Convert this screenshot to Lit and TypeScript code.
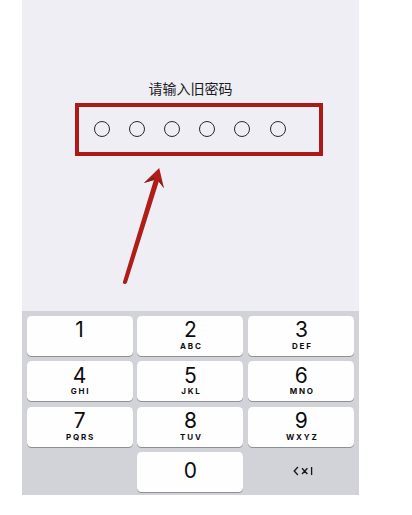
import { LitElement, html, css } from "lit";
import { customElement, property } from "lit/decorators.js";

@customElement("key-button")
class KeyButton extends LitElement {
  @property() digit = "";
  @property() letters = "";

  static styles = css`
    :host {
      display: flex;
      flex-direction: column;
      align-items: center;
      box-sizing: border-box;
      height: 40px;
      padding-top: 2.5px;
      border-radius: 4.5px;
      background: #fefeff;
      box-shadow: 0 1px 0 #8f9095;
      color: #0c0c0e;
      font-family: Inter, "Liberation Sans", sans-serif;
    }
    :host([centered]) {
      padding-top: 7px;
    }
    :host([lower]) {
      padding-top: 4px;
    }
    .digit {
      font-size: 21px;
      line-height: 24px;
      height: 24px;
    }
    :host([lower]) .digit {
      line-height: 22px;
      height: 22px;
    }
    .letters {
      font-size: 8px;
      font-weight: 700;
      line-height: 8px;
      letter-spacing: 1.8px;
      margin-right: -1.8px;
    }
  `;

  render() {
    return html`<div class="digit">${this.digit}</div>
      <div class="letters">${this.letters}</div>`;
  }
}

@customElement("app-root")
class AppRoot extends LitElement {
  static styles = css`
    :host {
      display: block;
      width: 412px;
      height: 515px;
      background: #fff;
      overflow: hidden;
    }
    .screen {
      position: relative;
      display: flex;
      flex-direction: column;
      width: 337px;
      height: 495px;
      margin-left: 22px;
      background: #efeef4;
    }
    .prompt {
      flex: 1;
    }
    .title {
      margin-top: 78px;
      height: 20px;
      line-height: 20px;
      text-align: center;
      font-family: "Noto Sans CJK SC", sans-serif;
      font-size: 14px;
      color: #1b1b1f;
    }
    .code {
      display: flex;
      align-items: center;
      box-sizing: border-box;
      width: 248px;
      height: 53px;
      margin: 5px 0 0 53px;
      padding: 0 0 2px 15px;
      border: 4px solid #ab1a17;
      gap: 19.1px;
    }
    .dot {
      box-sizing: border-box;
      width: 16px;
      height: 16px;
      border: 1.2px solid #29292d;
      border-radius: 50%;
    }
    .dot:last-child {
      margin-left: 0.5px;
    }
    .arrow {
      position: absolute;
      left: 98px;
      top: 164px;
      width: 50px;
      height: 124px;
    }
    .keyboard {
      display: grid;
      box-sizing: border-box;
      height: 184px;
      grid-template-columns: repeat(3, 106px);
      grid-auto-rows: 40px;
      gap: 5.6px 4.9px;
      padding: 4.7px 0 0 4.6px;
      background: #d1d3d9;
    }
    .delete {
      display: flex;
      align-items: center;
      justify-content: center;
    }
    .delete svg {
      width: 20px;
      height: 10px;
      margin: -2px 0 0 4px;
    }
  `;

  render() {
    const keys = [
      ["1", ""], ["2", "ABC"], ["3", "DEF"],
      ["4", "GHI"], ["5", "JKL"], ["6", "MNO"],
      ["7", "PQRS"], ["8", "TUV"], ["9", "WXYZ"],
    ];
    return html`
      <div class="screen">
        <div class="prompt">
          <div class="title">请输入旧密码</div>
          <div class="code">${keys.slice(0, 6).map(() => html`<div class="dot"></div>`)}</div>
        </div>
        <svg class="arrow" viewBox="120 164 50 124">
          <path d="M159.2 168 L164 188.2 L158.8 181.5 L127 282.6 Q126.2 284.2 124.6 284.1 Q122.6 283.8 122.9 282 L153.9 180 L143.8 183 Z" fill="#b01c16" />
          <path d="M143.8 183 L154 176.5 L153.9 180 Z M164 188.2 L160.5 179.5 L158.8 181.5 Z" fill="#7d221d" />
        </svg>
        <div class="keyboard">
          ${keys.map(
            ([d, l], i) => html`<key-button digit=${d} letters=${l} ?lower=${i > 2 && i < 6}></key-button>`
          )}
          <div></div>
          <key-button digit="0" centered></key-button>
          <div class="delete">
            <svg viewBox="0 0 20 10" fill="none" stroke="#151518" stroke-width="1.3">
              <path d="M4.9 1 L1.2 5 L4.9 9 M9 2.3 L14.4 8 M14.4 2.3 L9 8 M18.6 1 V9" />
            </svg>
          </div>
        </div>
      </div>
    `;
  }
}
